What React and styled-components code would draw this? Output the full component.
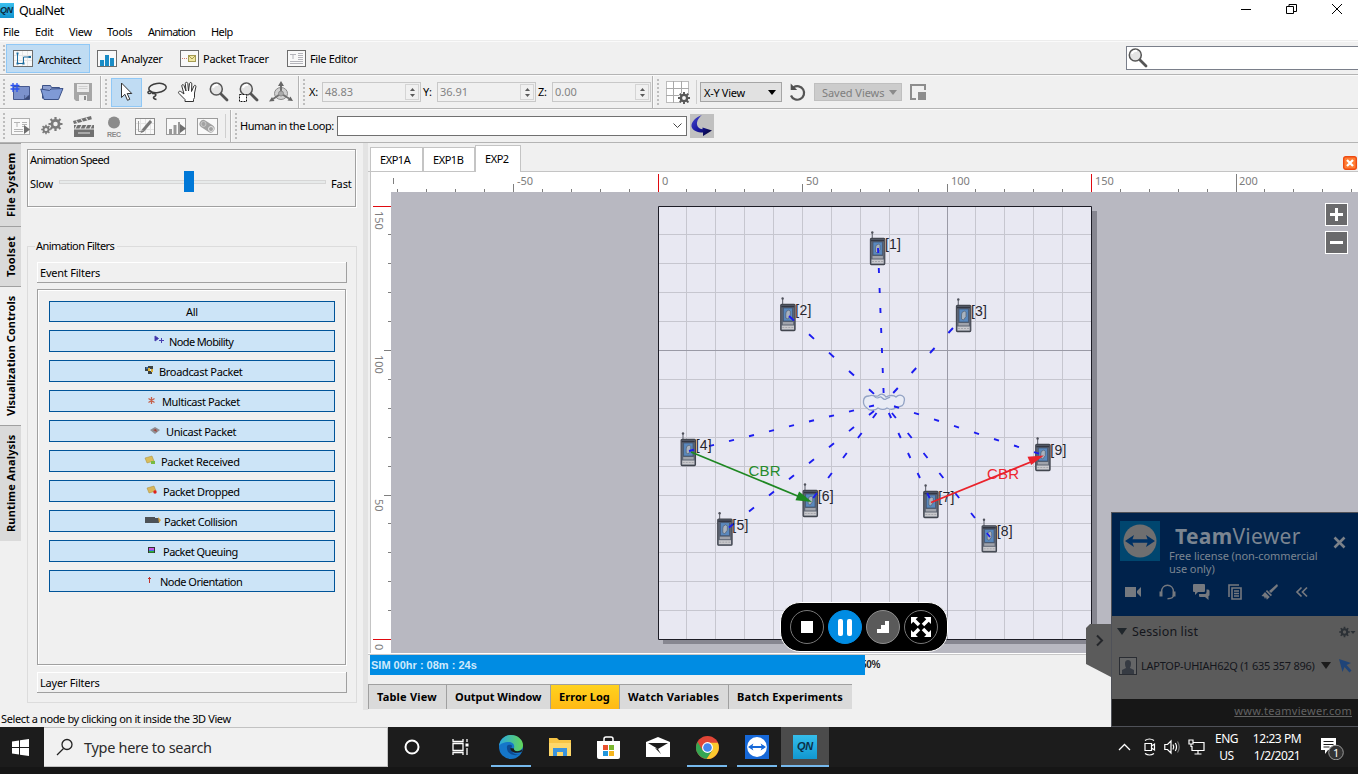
import React from "react";
import styled, { createGlobalStyle, css } from "styled-components";

const UI = `"Noto Sans", "Open Sans", "Liberation Sans", sans-serif`;

const Global = createGlobalStyle`
  *, *::before, *::after { box-sizing: border-box; }
  html, body { margin: 0; padding: 0; overflow: hidden; }
  svg { display: block; flex: none; }
`;

const Desktop = styled.div`
  position: relative;
  width: 1358px;
  height: 774px;
  display: flex;
  flex-direction: column;
  background: #f0f0f0;
  font-family: ${UI};
  font-size: 11px;
  line-height: 14px;
  letter-spacing: -0.3px;
  color: #000;
  overflow: hidden;
  white-space: nowrap;
`;

const Label = styled.span`
  display: block;
  flex: none;
  letter-spacing: ${(p) => p.$ls ?? -0.3}px;
  color: ${(p) => p.$color || "inherit"};
  font-size: ${(p) => p.$size || 11}px;
  font-weight: ${(p) => (p.$bold ? 700 : 400)};
  width: ${(p) => (p.$w ? p.$w + "px" : "auto")};
`;

/* ---------- window frame ---------- */

const TitleBar = styled.header`
  display: flex;
  align-items: center;
  height: 21px;
  flex: none;
  background: #fff;
`;
const AppBadge = styled.div`
  width: 14px;
  height: 15px;
  margin: -1px 5px 0 0;
  background: linear-gradient(#3cc0ee, #1093cf);
  font: italic 700 9px/15px "Liberation Sans", sans-serif;
  letter-spacing: -0.6px;
  color: #0a2c42;
  overflow: hidden;
`;
const WindowButtons = styled.div`
  display: flex;
  gap: 34px;
  margin: -3px 15px 0 auto;
`;
const MenuBar = styled.nav`
  display: flex;
  height: 20px;
  flex: none;
  padding: 4px 0 0 3px;
  background: #fff;
  border-bottom: 1px solid #ececec;
`;

/* ---------- toolbars ---------- */

const Toolbar = styled.div`
  display: flex;
  align-items: center;
  flex: none;
  height: ${(p) => p.$h}px;
  border-top: 1px solid #fafafa;
  border-bottom: 1px solid #b4b4b4;
`;
const Grip = styled.i`
  flex: none;
  width: 2px;
  height: 26px;
  margin: 0 ${(p) => p.$after ?? 5}px 0 3px;
  background: repeating-linear-gradient(#bdbdbd 0 2px, transparent 2px 4px);
`;
const Divider = styled.i`
  flex: none;
  align-self: stretch;
  width: 2px;
  background: linear-gradient(90deg, #b4b4b4 50%, #fafafa 50%);
`;
const Hairline = styled.i`
  flex: none;
  width: 1px;
  height: 24px;
  background: #cfcfcf;
`;
const Slot = styled.div`
  flex: none;
  display: flex;
  align-items: center;
  width: ${(p) => p.$w}px;
`;
const ModeButton = styled.button`
  display: flex;
  align-items: center;
  flex: none;
  height: 29px;
  width: ${(p) => p.$w}px;
  padding: 0 0 0 6px;
  gap: ${(p) => (p.$on ? 5 : 4)}px;
  border: 1px solid ${(p) => (p.$on ? "#90c8f6" : "transparent")};
  background: ${(p) => (p.$on ? "#c0dcf3" : "transparent")};
  font: inherit;
  color: inherit;

  span { padding-top: ${(p) => (p.$on ? 3 : 2)}px; }
`;
const ToolPressed = styled.div`
  display: flex;
  align-items: center;
  justify-content: center;
  width: 31px;
  height: 29px;
  margin-right: 4px;
  border: 1px solid #90c8f6;
  background: #c0dcf3;
`;
const SearchField = styled.div`
  display: flex;
  align-items: center;
  width: 232px;
  height: 24px;
  margin: 0 0 0 auto;
  background: #fff;
  border: 1px solid #7a7f8a;
  border-right: 0;
`;
const Spin = styled.div`
  display: flex;
  align-items: center;
  justify-content: space-between;
  flex: none;
  width: 99px;
  height: 20px;
  padding: 0 1px 0 2px;
  border: 1px solid #c8c8c8;
  color: #838383;
  letter-spacing: 0;
`;
const SpinArrows = styled.div`
  display: flex;
  flex-direction: column;
  justify-content: center;
  align-items: center;
  gap: 3px;
  width: 14px;
  height: 16px;
  border: 1px solid #d4d4d4;
`;
const Dropdown = styled.div`
  display: flex;
  align-items: center;
  justify-content: space-between;
  flex: none;
  width: ${(p) => p.$w}px;
  height: ${(p) => p.$h}px;
  padding: 0 ${(p) => (p.$off ? 4 : 5)}px 0 ${(p) => (p.$off ? 7 : 3)}px;
  background: ${(p) => (p.$off ? "#cccccc" : "#e1e1e1")};
  border: 1px solid ${(p) => (p.$off ? "#bfbfbf" : "#a5a5a5")};
  color: ${(p) => (p.$off ? "#7e7e7e" : "#000")};

  span { padding-top: 1px; }
`;
const Combo = styled.div`
  display: flex;
  align-items: center;
  justify-content: flex-end;
  width: 350px;
  height: 20px;
  padding-right: 4px;
  background: #fff;
  border: 1px solid #707070;
`;
const SendButton = styled.div`
  width: 24px;
  height: 24px;
  margin-left: 3px;
  background: #c0c0c0;
`;

/* ---------- left dock ---------- */

const Workspace = styled.main`
  display: flex;
  flex: none;
  height: 567px;
`;
const SideTabs = styled.div`
  display: flex;
  flex-direction: column;
  width: 21px;
`;
const SideTab = styled.div`
  height: ${(p) => p.$h}px;
  flex: none;
  display: flex;
  align-items: center;
  writing-mode: vertical-rl;
  transform: rotate(180deg);
  line-height: 18px;
  background: ${(p) => (p.$on ? "#f0f0f0" : "#dadada")};
  border-bottom: 1px solid #a0a0a0;
  padding: 9px 2px 0 1px;
  font-weight: 700;
  letter-spacing: ${(p) => p.$ls}px;
`;
const ControlPanel = styled.section`
  width: 342px;
  padding: 6px 6px 0 6px;
`;
const SpeedBox = styled.div`
  width: 329px;
  height: 58px;
  padding: 3px 2px 0 2px;
  border: 1px solid #a0a0a0;
  box-shadow: inset 1px 1px #fff, 1px 1px #fff;
`;
const SliderRow = styled.div`
  display: flex;
  align-items: center;
  margin-top: 10px;
`;
const SliderTrack = styled.div`
  width: 267px;
  height: 4px;
  margin: -4px 5px 0 7px;
  background: #e7eaea;
  border: 1px solid #d6d6d6;
`;
const SliderThumb = styled.div`
  width: 10px;
  height: 21px;
  margin: -10px 0 0 124px;
  background: #0078d7;
`;
const FilterGroup = styled.fieldset`
  width: 330px;
  height: 464px;
  margin: 32px 0 0 0;
  padding: 9px 0 0 9px;
  border: 1px solid #dcdcdc;
`;
const GroupTitle = styled.legend`
  height: 14px;
  margin-left: -2px;
  padding: 0 3px 0 1px;
  letter-spacing: -0.55px;
`;
const SectionHeader = styled.div`
  width: 310px;
  height: 21px;
  padding: 4px 0 0 3px;
  border: solid #a0a0a0;
  border-width: 0 1px 1px 0;
  box-shadow: inset 1px 1px #fff;
  letter-spacing: -0.22px;
`;
const FilterList = styled.div`
  display: flex;
  flex-direction: column;
  gap: 8px;
  width: 309px;
  height: 376px;
  margin: 6px 0 7px;
  padding: 11px 10px 0 11px;
  border: 1px solid #a0a0a0;
  box-shadow: inset 1px 1px #fff, 1px 1px #fff;
`;
const FilterButton = styled.button`
  display: flex;
  align-items: center;
  flex: none;
  height: ${(p) => (p.$plain ? 21 : 22)}px;
  padding: 1px 0 0 ${(p) => p.$pad}px;
  background: #cce4f7;
  border: 1px solid #005499;
  font: inherit;
  letter-spacing: inherit;
  color: #000;
`;
const FilterIcon = styled.span`
  width: ${(p) => p.$w}px;
  display: flex;
  margin-top: -3px;
`;
const Splitter = styled.i`
  width: 5px;
  background: #e3e3e3;
`;

/* ---------- simulation view ---------- */

const View = styled.section`
  display: flex;
  flex-direction: column;
  width: 990px;
`;
const DocTabs = styled.div`
  display: flex;
  align-items: flex-end;
  height: 29px;
  padding-left: 2px;
  border-bottom: 1px solid #c4c4c4;
`;
const DocTab = styled.div`
  flex: none;
  width: ${(p) => p.$w}px;
  height: ${(p) => (p.$on ? 27 : 24)}px;
  padding: ${(p) => (p.$on ? 6 : 5)}px 0 0 9px;
  margin-bottom: ${(p) => (p.$on ? -1 : 0)}px;
  background: #fff;
  border: 1px solid #c4c4c4;
  border-bottom: 0;
  letter-spacing: -0.45px;
`;
const CloseDoc = styled.div`
  margin: 0 1px 1px auto;
`;
const Scene = styled.div`
  height: 482px;
  padding-left: 2px;
  border-bottom: 1px solid #fff;
`;
const ProgressRow = styled.div`
  display: flex;
  height: 30px;
  padding-left: 2px;
  border-top: 1px solid #c8c8c8;
`;
const ProgressFill = styled.div`
  position: relative;
  z-index: 1;
  width: 495px;
  height: 20px;
  background: #008ce3;
  font: 700 11px/20px "Liberation Sans", sans-serif;
  letter-spacing: 0;
  color: #cfe9fb;
  padding-left: 1px;
`;
const ProgressRest = styled.div`
  height: 20px;
  margin-left: -4px;
  font: 700 10px/20px "Liberation Sans", sans-serif;
  color: #222;
`;
const OutputTabs = styled.div`
  display: flex;
  height: 25px;
`;
const OutputTab = styled.div`
  flex: none;
  width: ${(p) => p.$w}px;
  height: 25px;
  padding: 5px 0 0 8px;
  border-top: 1px solid #a0a0a0;
  border-left: 1px solid #a0a0a0;
  background: ${(p) => (p.$alert ? "linear-gradient(#ffd21f, #ffb915)" : "#dadada")};
  font-weight: 700;
  letter-spacing: ${(p) => p.$ls}px;
`;
const StatusBar = styled.footer`
  flex: none;
  height: 17px;
  padding: 2px 0 0 1px;
  letter-spacing: -0.38px;
`;

/* ---------- floating player ---------- */

const Player = styled.div`
  position: absolute;
  left: 780px;
  top: 602px;
  width: 168px;
  height: 50px;
  display: flex;
  align-items: center;
  justify-content: center;
  gap: 4px;
  background: #000;
  border: 1px solid #fff;
  border-radius: 20px;
`;
const Round = styled.div`
  width: 34px;
  height: 34px;
  display: flex;
  align-items: center;
  justify-content: center;
  border-radius: 50%;
  border: 1px solid ${(p) => p.$edge || "#777"};
  background: ${(p) => p.$bg || "#000"};
`;

/* ---------- session overlay ---------- */

const SessionPanel = styled.aside`
  position: absolute;
  left: 1111px;
  top: 512px;
  width: 247px;
  height: 215px;
  display: flex;
  flex-direction: column;
  background: #5b5b5b;
  border: 1px solid #4f5158;
  border-right: 0;
  letter-spacing: 0;
`;
const SessionHandle = styled.div`
  position: absolute;
  left: 1086px;
  top: 624px;
`;
const SessionHead = styled.div`
  height: 103px;
  flex: none;
  padding: 8px 0 0 8px;
  background: #00224b;
  color: #7b8591;
`;
const Brand = styled.div`
  display: flex;
  height: 56px;
`;
const BrandText = styled.div`
  width: 164px;
  margin-left: 9px;
  padding-top: 2px;
  font-size: 11px;
  line-height: 13px;
  letter-spacing: -0.08px;
`;
const BrandName = styled.div`
  padding-left: 6px;
  height: 26px;
  font-size: 21px;
  line-height: 27px;
  letter-spacing: 0.3px;
`;
const SessionClose = styled.div`
  padding-top: 15px;
`;
const SessionTools = styled.div`
  display: flex;
  align-items: center;
  gap: 17px;
  padding: 7px 0 0 5px;
`;
const SessionRow = styled.div`
  display: flex;
  align-items: center;
  height: ${(p) => p.$h}px;
  padding-left: ${(p) => p.$pl}px;
  color: #14161c;
`;
const SessionFoot = styled.div`
  margin-top: auto;
  height: 27px;
  padding: 5px 6px 0 0;
  background: #171717;
  text-align: right;
  font-size: 11px;
  letter-spacing: 0.3px;
  color: #626262;
  text-decoration: underline;
`;

/* ---------- taskbar ---------- */

const Taskbar = styled.footer`
  display: flex;
  flex: none;
  height: 47px;
  background: #1c1c1c;
  border-bottom: 7px solid #161616;
  color: #fff;
`;
const StartCell = styled.div`
  width: 44px;
  padding: 12px 0 0 12px;
`;
const TaskSearch = styled.div`
  display: flex;
  align-items: center;
  gap: 10px;
  width: 344px;
  padding-left: 12px;
  background: #f1f1f1;
  border: 1px solid #c2c2c2;
  border-left: 0;
  color: #2b2b2b;
`;
const TaskCell = styled.div`
  width: ${(p) => p.$w || 49}px;
  display: flex;
  align-items: center;
  justify-content: center;
  background: ${(p) => (p.$on ? "#4b4b4b" : "transparent")};
  ${(p) =>
    p.$open &&
    css`
      background-image: linear-gradient(#76b9ed, #76b9ed);
      background-repeat: no-repeat;
      background-size: ${p.$on ? "100%" : "40px"} 2px;
      background-position: center bottom;
    `}
`;
const QnTile = styled.div`
  width: 24px;
  height: 24px;
  background: linear-gradient(#35bdea, #1197d0);
  color: #0b3048;
  text-align: center;
  font: italic 700 11px/23px "Liberation Sans", sans-serif;
`;
const Tray = styled.div`
  display: flex;
  align-items: center;
  margin-left: auto;
  width: 241px;
`;
const TrayText = styled.div`
  width: ${(p) => p.$w}px;
  text-align: center;
  font-size: 12px;
  line-height: 17px;
  letter-spacing: ${(p) => p.$ls}px;
`;

/* ---------- toolbar icons ---------- */

const Frame = ({ children, w = 20, h = 17, stroke = "#6d6d6d" }) => (
  <svg width={w} height={h} viewBox={`0 0 ${w} ${h}`} fill="none">
    <rect x=".5" y=".5" width={w - 1} height={h - 1} fill="#f9f9f9" stroke={stroke} />
    {children}
  </svg>
);
const ArchitectIcon = () => (
  <Frame>
    <path d="M4.500 1v15M9.500 1v15M14.500 1v15M1 5.500h18M1 10.500h18" stroke="#e6e6e6" />
    <path d="M4.500 3.500V13.500h6V7h6" stroke="#1d6c9f" />
    <path d="M3.500 2.500h2v2h-2zM3.500 12.500h2v2h-2zM9.500 12.500h2v2h-2zM15.500 6h2.500v2h-2.500z" fill="#1d6c9f" />
  </Frame>
);
const AnalyzerIcon = () => (
  <Frame>
    <path d="M3 10h4v6H3zM8 5h4v11H8zM13 8h4v8h-4z" fill="#1a8cc6" />
  </Frame>
);
const TracerIcon = () => (
  <Frame w={19}>
    <path d="M2 8.500h5" stroke="#cf7c6a" strokeDasharray="1 1" />
    <rect x="8.500" y="5.500" width="7" height="6" fill="#f0e7a2" stroke="#a49a51" />
    <path d="m9 6 3 3 3-3" stroke="#a49a51" />
  </Frame>
);
const EditorIcon = () => (
  <Frame w={19}>
    <path d="M3 4.500h6M6 4v5M11 3.500h5M11 5.500h5M11 7.500h5M11 9.500h5M3 11.500h13M3 13.500h13" stroke="#b4b4ba" />
  </Frame>
);
const Magnifier = ({ area }) => (
  <svg width="22" height="22" viewBox="0 0 22 22" fill="none">
    <path d="m13 13 6 6" stroke="#555" strokeWidth="2.800" strokeLinecap="round" />
    <circle cx="8.300" cy="8" r="6" fill="#e4e4e4" stroke="#555" strokeWidth="1.500" />
    <path d="M5 7a4 4 0 0 1 5-3" stroke="#fff" strokeWidth="2" />
    {area && <rect x="1.500" y="13.500" width="7" height="7" fill="#fff" stroke="#111" strokeDasharray="2 1" />}
  </svg>
);
const NewIcon = () => (
  <svg width="22" height="20" viewBox="0 0 22 20" fill="none">
    <path d="M3.500 4.500h16v13h-16z" fill="#7c92cc" stroke="#46598e" />
    <path d="M14 17.500V13h5.500v4.500z" fill="#3b4a78" />
    <path d="m14.500 17 4.500-4h-4.500z" fill="#7288c2" />
    <path d="M3 1v9M7 1v9M.5 3.500h9M.5 7h9" stroke="#2a52f0" strokeWidth="1.300" />
  </svg>
);
const OpenIcon = () => (
  <svg width="24" height="18" viewBox="0 0 24 18" fill="none">
    <path d="M2.500 15.500v-13h8l1 2h8v3" fill="#8c9fd0" stroke="#3c5288" />
    <path d="m.8 6 3.200 10.500h14.500l4.500-11-12 .5-1.500 1.500z" fill="#7f9ad6" stroke="#3c5288" />
  </svg>
);
const SaveIcon = () => (
  <svg width="18" height="18" viewBox="0 0 18 18">
    <path d="M0 0h18v18H2l-2-2z" fill="#a6a6a6" />
    <path d="M3 1h12v8H3zM5 12h8v6H5z" fill="#ececec" />
    <path d="M10 13h2v4h-2z" fill="#8a8a8a" />
    <path d="M4.500 3.500h9M4.500 5.500h9" stroke="#cfcfcf" />
  </svg>
);
const CursorIcon = () => (
  <svg width="13" height="20" viewBox="0 0 13 20">
    <path d="M1.500 1v14.500l3.400-3.200 2.600 6 2.300-1-2.600-5.800h4.600z" fill="#fff" stroke="#333" />
  </svg>
);
const LassoIcon = () => (
  <svg width="22" height="20" viewBox="0 0 22 20" fill="none" stroke="#3d3d3d" strokeWidth="1.500">
    <ellipse cx="11.500" cy="6" rx="8.800" ry="4.500" transform="rotate(-8 11.500 6)" />
    <path d="M4 9c-3 0-2.500 3 0 2.500 2-.3 1.500-2.500 0-2.500M6 11.500c4-.5 5 1.500 2.500 3s0 2.500 2 3" />
  </svg>
);
const HandIcon = () => (
  <svg width="22" height="22" viewBox="0 0 22 22">
    <path
      d="M8 20.500v-2L2 12.500c-1.500-2 .8-2.800 2-1.800L7 13 4.800 5c-.3-1.500 1.700-2 2.200-.5L9 10 8.300 2.500c0-1.600 2.200-1.600 2.500 0L11.500 10l1-7.500c.3-1.500 2.300-1.300 2.300.3L14.500 10.500l2.400-5.500c.7-1.300 2.400-.7 2 .8L17.500 12v4.500l-1 2v2z"
      fill="#fff"
      stroke="#333"
    />
  </svg>
);
const AxesIcon = () => (
  <svg width="24" height="22" viewBox="0 0 24 22" fill="none" stroke="#8a8a8a">
    <ellipse cx="12" cy="12.500" rx="6.500" ry="6" fill="#d0d0d0" />
    <path d="M12 12.500V3M12 12.500 4 18M12 12.500l8 5" strokeWidth="2" stroke="#707070" />
    <path d="m12 0 3 5H9zM0 20.500l5.500-.5L3 16zM24 20l-2.500-4.500-3 4z" fill="#666" stroke="none" />
    <circle cx="12" cy="12.500" r="2.500" fill="#aaa" />
  </svg>
);
const cogTeeth = (cx, cy, r1, r2, n) =>
  Array.from({ length: n }, (_, i) => {
    const a = (i * 2 * Math.PI) / n;
    return `M${cx + r1 * Math.cos(a)} ${cy + r1 * Math.sin(a)}L${cx + r2 * Math.cos(a)} ${cy + r2 * Math.sin(a)}`;
  }).join("");
const Cog = ({ cx, cy, r, color }) => (
  <g stroke={color} fill="none">
    <circle cx={cx} cy={cy} r={r * 0.52} strokeWidth={r * 0.4} />
    <path d={cogTeeth(cx, cy, r * 0.6, r, 8)} strokeWidth={r * 0.32} />
  </g>
);
const GridIcon = () => (
  <svg width="25" height="25" viewBox="0 0 25 25" fill="none">
    <rect x=".5" y="1.500" width="22" height="21" fill="#fff" stroke="#bcbcbc" />
    <path d="M7.500 1v22M15.500 1v22M0 8.500h23M0 15.500h23" stroke="#a9a9a9" />
    <circle cx="18" cy="18" r="5.500" fill="#f4f4f4" />
    <Cog cx={18} cy={18} r={6} color="#585858" />
  </svg>
);
const RefreshIcon = () => (
  <svg width="18" height="19" viewBox="0 0 18 19" fill="none">
    <path d="M4.500 4.300A6.800 6.800 0 1 1 2 12.500" stroke="#555" strokeWidth="2.200" />
    <path d="M1.700.5v6.500h6.500z" fill="#4f4f4f" />
  </svg>
);
const PanelIcon = () => (
  <svg width="16" height="16" viewBox="0 0 16 16" fill="none">
    <path d="M6 15H1V1h14v5" stroke="#8d8d8d" strokeWidth="2" />
    <path d="M8 8h8v8H8z" fill="#8d8d8d" />
  </svg>
);
const RunIcon = () => (
  <Frame w={19} stroke="#b0b0b0">
    <path d="M3 4.500h6M6 4v5M11 4.500h5M11 6.500h5M11 8.500h3M3 11.500h9M3 13.500h9" stroke="#b4b4b4" />
    <path d="M13 7v9l6-4.500z" fill="#6e6e6e" />
  </Frame>
);
const CogsIcon = () => (
  <svg width="22" height="18" viewBox="0 0 22 18">
    <Cog cx={5} cy={12.500} r={4.800} color="#7b7b7b" />
    <Cog cx={14.500} cy={7} r={7} color="#7b7b7b" />
  </svg>
);
const ClapperIcon = () => (
  <svg width="23" height="23" viewBox="0 0 23 23">
    <path d="M2 10h20v12H2z" fill="#707070" />
    <path d="m1 6 18-5 .8 3.200L2 9z" fill="#707070" />
    <path d="m4 5.500 2 3M9 4l2 3M14 2.700l2 3M5 10l-2 3.500M10 10l-2 3.500M15 10l-2 3.500M20 10l-2 3.500M2 14h20M6 18h12" stroke="#e2e2e2" strokeWidth="1.200" />
  </svg>
);
const RecIcon = () => (
  <svg width="16" height="21" viewBox="0 0 16 21">
    <circle cx="8" cy="6.500" r="6" fill="#8b8b8b" />
    <text x="1" y="20.500" fontFamily="Liberation Sans, sans-serif" fontSize="7" fontWeight="700" fill="#8b8b8b" letterSpacing="0" textLength="14">
      REC
    </text>
  </svg>
);
const PencilIcon = () => (
  <Frame w={20} stroke="#8c8c8c">
    <path d="M5.500 1v15M10.500 1v15M15.500 1v15M1 5.500h18M1 11.500h18" stroke="#e4e4e4" />
    <path d="M3.500 3v10.500H9" stroke="#9c9c9c" />
    <path d="m8 12.500 8-9.500" stroke="#777" strokeWidth="3" />
    <path d="m6 15 .7-3.300 2.300 2z" fill="#777" />
  </Frame>
);
const ChartRunIcon = () => (
  <Frame w={20} stroke="#9b9b9b">
    <path d="M3 11h3v5H3zM7.500 7h3v9h-3zM12 4h2v12h-2z" fill="#999" />
    <path d="M14 6v9l6-4.500z" fill="#6e6e6e" />
  </Frame>
);
const LinkIcon = () => (
  <Frame w={21} stroke="#9b9b9b">
    <path d="m6.500 6 7 4.500" stroke="#a2a2a2" strokeWidth="8" strokeLinecap="round" />
    <circle cx="6.500" cy="6" r="2.500" stroke="#c9c9c9" />
    <circle cx="14" cy="11" r="2.500" stroke="#e5e5e5" />
  </Frame>
);
const CurvedArrow = () => (
  <svg width="24" height="24" viewBox="0 0 24 24">
    <defs>
      <linearGradient id="sweep" x1="0" y1="0" x2="1" y2="1">
        <stop offset="0" stopColor="#4848cc" />
        <stop offset=".5" stopColor="#1717a0" />
        <stop offset="1" stopColor="#020220" />
      </linearGradient>
    </defs>
    <path d="M12 1C6 3 1 8 1.500 12.500c1 4 6 6 11.500 6V22l9-5.500-9.500-3v1.700C8.500 15 6.500 11.500 7 8.500 7.500 5.500 9.500 3 12 1z" fill="url(#sweep)" />
  </svg>
);
const Tri = ({ up, c = "#5c5c5c", w = 5, h = 3 }) => (
  <svg width={w} height={h} viewBox="0 0 10 6" preserveAspectRatio="none">
    <path d={up ? "M0 6 5 0l5 6z" : "M0 0h10L5 6z"} fill={c} />
  </svg>
);

/* ---------- filter list ---------- */

const FILTERS = [
  { name: "All", pad: 136, ls: -0.3 },
  {
    name: "Node Mobility", pad: 104, iw: 15, ls: -0.62,
    icon: <path d="M1 1l3.500 2.500L1 6zM7.500 3v5M5 5.500h5" fill="#3a2fa5" stroke="#4a40b0" />,
  },
  {
    name: "Broadcast Packet", pad: 94, iw: 15, ls: -0.33,
    icon: (
      <g>
        <path d="M1 2h3v4H1zM4 1h5v3H4zM4 6h4v3H4z" fill="#3d4344" />
        <path d="M4 3h2v3H4zM7 4h2v3H7z" fill="#e0b43a" />
        <path d="M2 2h2v2H2z" fill="#3e70a8" />
      </g>
    ),
  },
  {
    name: "Multicast Packet", pad: 97, iw: 15, ls: -0.4,
    icon: <path d="M4.500 2v7M1.500 3.500l6 4M1.500 7.500l6-4" stroke="#c5604b" strokeWidth="1.300" />,
  },
  {
    name: "Unicast Packet", pad: 100, iw: 16, ls: -0.37,
    icon: (
      <g>
        <path d="m0 5 5-3 5 3-5 4z" fill="#8f8f93" />
        <path d="m3 5 3-1 1 3z" fill="#a33f36" />
      </g>
    ),
  },
  {
    name: "Packet Received", pad: 94, iw: 17, ls: -0.28,
    icon: (
      <g>
        <path d="m1 3 7-2 2 5-7 2z" fill="#d8bd5c" stroke="#a88c35" strokeWidth=".5" />
        <path d="M7 6h4v3H7z" fill="#77ba42" />
      </g>
    ),
  },
  {
    name: "Packet Dropped", pad: 96, iw: 17, ls: -0.42,
    icon: (
      <g>
        <path d="m1 3 7-2 2 5-7 2z" fill="#d8b65c" stroke="#a88c35" strokeWidth=".5" />
        <circle cx="9" cy="7" r="1.700" fill="#e0201c" />
      </g>
    ),
  },
  {
    name: "Packet Collision", pad: 95, iw: 19, ls: -0.48,
    icon: (
      <g>
        <path d="M0 2h10v6H0zM10 3h4v5h-4z" fill="#4d5257" />
        <path d="m13 2 3 3-2 3z" fill="#d9a23c" />
      </g>
    ),
  },
  {
    name: "Packet Queuing", pad: 98, iw: 15, ls: -0.5,
    icon: (
      <g>
        <path d="M0 2h7v6H0z" fill="#333" />
        <path d="M1 3h5v2H1z" fill="#c855e0" />
        <path d="M1 5h5v1H1z" fill="#4b6be6" />
        <path d="M1 6h5v1.500H1z" fill="#2bb534" />
      </g>
    ),
  },
  {
    name: "Node Orientation", pad: 97, iw: 13, ls: -0.5,
    icon: <path d="M2.500 2v6M1 3.500h3" stroke="#c1332c" />,
  },
];

/* ---------- scene ---------- */

const HUB = [884, 403];
const NODES = [
  { id: 1, x: 870, y: 238, end: [878, 248] },
  { id: 2, x: 780.3, y: 304, end: [789, 316] },
  { id: 3, x: 956, y: 305, end: [964, 316] },
  { id: 4, x: 680.7, y: 439, end: [689, 451] },
  { id: 5, x: 717.3, y: 518.700, end: [726, 530] },
  { id: 6, x: 802.7, y: 490, end: [811, 501] },
  { id: 7, x: 923.3, y: 491, end: [931, 501] },
  { id: 8, x: 981.7, y: 525.300, end: [990, 537] },
  { id: 9, x: 1035.3, y: 444, end: [1043, 455] },
];

const NodeGlyph = ({ x, y }) => (
  <g transform={`translate(${x} ${y})`}>
    <path d="M2.300-6v7" stroke="#6f717c" strokeWidth="1.200" />
    <circle cx="2.300" cy="-5.500" r="1.200" fill="#50525c" />
    <rect x=".4" y=".4" width="14.400" height="26.200" rx="1" fill="#5d6472" stroke="#42464f" strokeWidth="1.100" />
    <path d="M1 2.500h13" stroke="#333743" strokeWidth="1.600" />
    <rect x="3" y="4" width="9.300" height="13" fill="#5a88bd" stroke="#41536e" strokeWidth=".7" />
    <path d="M6 7.500 8.500 6l1.500 1.500v4L7.500 15 5.500 14v-4z" fill="#a9b3bf" stroke="#4d5764" strokeWidth=".6" />
    <path d="M2.500 18h10.400v2.500H2.500z" fill="#a0a3ab" />
    <path d="M1.500 21.500h12.200v4H1.500z" fill="#c9c9cd" />
    <path d="M2 23.500h11" stroke="#a5a6ac" strokeDasharray="2 1" />
  </g>
);

const LinkLine = ({ end }) => {
  const dx = end[0] - HUB[0];
  const dy = end[1] - HUB[1];
  const k = Math.hypot(dx, dy) / Math.max(Math.abs(dx), Math.abs(dy));
  return (
    <path
      d={`M${HUB[0]} ${HUB[1]}L${end[0]} ${end[1]}`}
      stroke="#1c1cf0"
      strokeWidth="1.900"
      strokeDasharray={`${5 * k} ${15 * k}`}
      strokeDashoffset={10 * k}
    />
  );
};

const range = (n) => Array.from({ length: n }, (_, i) => i);
const gx = (i) => Math.floor(658 + i * 28.9 + 0.01) + 0.5;
const gy = (i) => Math.floor(206 + i * 28.9 + 0.01) + 0.5;

const SceneView = () => (
  <svg width="988" height="481" viewBox="370 172 988 481" fill="none" fontFamily='"Noto Sans", sans-serif' letterSpacing="0">
    <path d="M370 172h988v481H370z" fill="#fff" />
    <path d="M370.500 172v481" stroke="#c4c4c4" />
    <path d="M391 192h967v461H391z" fill="#b8b8c1" />

    <path d={range(34).map((i) => `M${gx(i - 9)} 189v3`).join("")} stroke="#7f7f7f" />
    <path d={range(14).map((i) => `M388 ${gy(i + 1)}h3`).join("")} stroke="#7f7f7f" />
    <path d="M513.500 184v8M802.500 184v8M947.500 184v8M1236.500 174v18M384 350.500h7M384 495.500h7M393.500 178v6" stroke="#7f7f7f" />
    <path d="M658.500 174v18M1091.500 174v18M373 206.500h18M373 639.500h18" stroke="#e00a10" />
    <g fill="#7d7d7d" fontSize="11">
      {[["-50", 517], ["0", 662], ["50", 806], ["100", 951], ["150", 1095], ["200", 1239]].map(([t, x]) => (
        <text key={t} x={x} y="185">{t}</text>
      ))}
      {[["150", 211], ["100", 355], ["50", 499], ["0", 644]].map(([t, y]) => (
        <text key={t} transform={`translate(375 ${y}) rotate(90)`}>{t}</text>
      ))}
    </g>

    <path d="M663 211h434v433H663z" fill="#868690" />
    <path d="M658.500 206.500h433v433h-433z" fill="#e8e8f2" />
    <path d={range(14).map((i) => `M${gx(i + 1)} 207v432M659 ${gy(i + 1)}h432`).join("")} stroke="#c6c6cf" />
    <path d="M947.500 207v432M659 350.500h432" stroke="#9a9aa6" />
    <path d="M658.500 206.500h433v433h-433z" stroke="#1c1c26" />

    <path
      d="M867 408c-5-3-5-12 2-12 4-2 6 1 9 0 3-3 6-2 8 1 3-2 8-2 10 0 4-4 10-1 8 5 0 5-5 5-8 5-3 4-7 2-9 1-4 3-7 1-9 0-3 3-9 3-11 0z"
      fill="#e9ecf5"
      stroke="#93a3c4"
      strokeWidth="1.300"
    />
    <path d="M874 396c2 3 4 2 6 1s3 4 6 2 3-1 4-2" stroke="#8fa0c3" strokeWidth="1.200" />
    {NODES.map((n) => <NodeGlyph key={n.id} x={n.x} y={n.y} />)}
    {NODES.map((n) => <LinkLine key={n.id} end={n.end} />)}
    <g fill="#26262e" fontSize="14">
      {NODES.map((n) => (
        <text key={n.id} x={n.x + 15} y={n.y + 11} textLength="16" fontFamily="Liberation Sans, sans-serif">{`[${n.id}]`}</text>
      ))}
    </g>
    <g fontFamily="Liberation Sans, sans-serif" fontSize="15">
      <text x="748.500" y="475.500" fill="#258a2b" textLength="32">CBR</text>
      <text x="987" y="479" fill="#ee2730" textLength="32">CBR</text>
    </g>
    <path d="M691 452 800 497" stroke="#1e8722" strokeWidth="1.800" />
    <path d="m812 502-16.500-1.800 3.600-8.700z" fill="#1e8722" />
    <path d="m931 502.500 101-41" stroke="#ea222b" strokeWidth="1.800" />
    <path d="m1044 456-16.500 1.300 3.600 8.200z" fill="#ea222b" transform="translate(0 -.5)" />

    {[203, 231].map((y, i) => (
      <g key={y}>
        <rect x="1325.500" y={y + 0.5} width="22" height="22" fill="#6a6a6c" stroke="#fff" />
        <path d={`M1330 ${y + 11.500}h13${i ? "" : `M1336.500 ${y + 5}v13`}`} stroke="#fff" strokeWidth="3" />
      </g>
    ))}
  </svg>
);

/* ---------- session overlay icons ---------- */

const SessionIcons = () => (
  <SessionTools>
    <svg width="17" height="16" viewBox="0 0 17 16" fill="#75797f">
      <path d="M0 3h11v10H0zM12 7l4-4v10l-4-4z" />
    </svg>
    <svg width="17" height="16" viewBox="0 0 17 16" fill="none" stroke="#75797f" strokeWidth="1.500">
      <path d="M2.500 8c0-9 12-9 12 0M14.500 11c0 3-2 3.500-6 3.700" />
      <path d="M2 7.500v5M15 7.500v5" strokeWidth="3" />
    </svg>
    <svg width="17" height="16" viewBox="0 0 17 16" fill="#75797f">
      <path d="M1 0h10q1 0 1 1v6q0 1-1 1H5l-3 3V8H1Q0 8 0 7V1q0-1 1-1z" />
      <path d="M13.500 5.500H15q1.500 0 1.500 1.500v4q0 1-1 1v4l-3.500-3H7q-1 0-1-1.500V10h6q1.500 0 1.500-2z" />
    </svg>
    <svg width="17" height="16" viewBox="0 0 17 16" fill="none" stroke="#75797f" strokeWidth="1.600">
      <path d="M12 1H2v12M5 4h9v11H5zM7 7h5M7 9.500h5M7 12h5" />
    </svg>
    <svg width="17" height="16" viewBox="0 0 17 16" fill="#75797f">
      <path d="m16 0 1 2-7 7-2-2zM6 6l5 5-1.200 1.200-5-5zM4 8l4.800 5-3 2.800L5 13l-1 2-1-2.500L.5 12z" />
    </svg>
    <svg width="14" height="16" viewBox="0 0 14 16" fill="none" stroke="#75797f" strokeWidth="1.700">
      <path d="M6.500 3.500 2 8l4.500 4.500M12 3.500 7.500 8l4.500 4.500" />
    </svg>
  </SessionTools>
);
const DoubleArrow = ({ size, ring, disc, arrow }) => (
  <svg width={size} height={size} viewBox="0 0 40 40">
    <path d="M0 0h40v40H0z" fill={ring} />
    <circle cx="20" cy="20" r="16.500" fill={disc} />
    <path d="m5 20 9-6-1.500 4.300h15L26 14l9 6-9 6 1.500-4.300h-15L14 26z" fill={arrow} />
  </svg>
);

export default function App() {
  return (
    <Desktop>
      <Global />
      <TitleBar>
        <AppBadge>QN</AppBadge>
        <Label $size={12.5} $ls={-0.55}>QualNet</Label>
        <WindowButtons>
          <svg width="12" height="12" viewBox="0 0 12 12"><path d="M1 6.500h10" stroke="#000" /></svg>
          <svg width="11" height="12" viewBox="0 0 11 12" fill="none" stroke="#000">
            <path d="M.5 3.500h7v7h-7zM3 3V1.500h7.500v7H8" />
          </svg>
          <svg width="12" height="12" viewBox="0 0 12 12"><path d="m1 1 10 10M11 1 1 11" stroke="#000" /></svg>
        </WindowButtons>
      </TitleBar>
      <MenuBar>
        <Label $w={32}>File</Label>
        <Label $w={34}>Edit</Label>
        <Label $w={38}>View</Label>
        <Label $w={41}>Tools</Label>
        <Label $w={63} $ls={-0.7}>Animation</Label>
        <Label $ls={-0.6}>Help</Label>
      </MenuBar>

      <Toolbar $h={34}>
        <Grip $after={1} />
        <ModeButton $on $w={84}><ArchitectIcon /><Label>Architect</Label></ModeButton>
        <ModeButton $w={83}><AnalyzerIcon /><Label $ls={-0.35}>Analyzer</Label></ModeButton>
        <ModeButton $w={107}><TracerIcon /><Label $ls={-0.25}>Packet Tracer</Label></ModeButton>
        <ModeButton $w={90}><EditorIcon /><Label $ls={-0.35}>File Editor</Label></ModeButton>
        <SearchField><Magnifier /></SearchField>
      </Toolbar>

      <Toolbar $h={34}>
        <Grip />
        <Slot $w={30}><NewIcon /></Slot>
        <Slot $w={34}><OpenIcon /></Slot>
        <Slot $w={26}><SaveIcon /></Slot>
        <Divider />
        <Grip $after={4} />
        <ToolPressed><CursorIcon /></ToolPressed>
        <Slot $w={31}><LassoIcon /></Slot>
        <Slot $w={31}><HandIcon /></Slot>
        <Slot $w={30}><Magnifier /></Slot>
        <Slot $w={31}><Magnifier area /></Slot>
        <Slot $w={29}><AxesIcon /></Slot>
        <Divider />
        <Grip $after={4} />
        {[["X:", "48.83", 13], ["Y:", "36.91", 14], ["Z:", "0.00", 14]].map(([axis, value, w]) => (
          <Slot key={axis} $w={w + 101 - (axis === "Z:" ? 1 : 0)}>
            <Label $w={w}>{axis}</Label>
            <Spin>
              {value}
              <SpinArrows><Tri up /><Tri /></SpinArrows>
            </Spin>
          </Slot>
        ))}
        <Divider />
        <Grip $after={7} />
        <Slot $w={30}><GridIcon /></Slot>
        <Hairline />
        <Slot $w={3} />
        <Dropdown $w={82} $h={20}><Label>X-Y View</Label><Tri c="#000" w={8} h={5} /></Dropdown>
        <Slot $w={7} />
        <Slot $w={25}><RefreshIcon /></Slot>
        <Dropdown $off $w={88} $h={18}><Label $ls={-0.05}>Saved Views</Label><Tri c="#8a8a8a" w={8} h={5} /></Dropdown>
        <Slot $w={8} />
        <PanelIcon />
      </Toolbar>

      <Toolbar $h={34}>
        <Grip $after={6} />
        <Slot $w={30}><RunIcon /></Slot>
        <Slot $w={31}><CogsIcon /></Slot>
        <Slot $w={34}><ClapperIcon /></Slot>
        <Slot $w={29}><RecIcon /></Slot>
        <Slot $w={31}><PencilIcon /></Slot>
        <Slot $w={31}><ChartRunIcon /></Slot>
        <Slot $w={28}><LinkIcon /></Slot>
        <Hairline />
        <Slot $w={4} />
        <Divider />
        <Grip $after={3} />
        <Label $w={97} $ls={-0.47}>Human in the Loop:</Label>
        <Combo>
          <svg width="9" height="6" viewBox="0 0 9 6"><path d="m.5.500 4 4 4-4" fill="none" stroke="#444" /></svg>
        </Combo>
        <SendButton><CurvedArrow /></SendButton>
      </Toolbar>

      <Workspace>
        <SideTabs>
          <SideTab $h={83} $ls={0.22}>File System</SideTab>
          <SideTab $h={60} $ls={0.2}>Toolset</SideTab>
          <SideTab $h={139} $on $ls={0.04}>Visualization Controls</SideTab>
          <SideTab $h={116} $ls={0.15}>Runtime Analysis</SideTab>
        </SideTabs>
        <ControlPanel>
          <SpeedBox>
            <Label $ls={-0.6}>Animation Speed</Label>
            <SliderRow>
              <Label $w={22}>Slow</Label>
              <SliderTrack><SliderThumb /></SliderTrack>
              <Label $ls={-0.1}>Fast</Label>
            </SliderRow>
          </SpeedBox>
          <FilterGroup>
            <GroupTitle>Animation Filters</GroupTitle>
            <SectionHeader>Event Filters</SectionHeader>
            <FilterList>
              {FILTERS.map((f) => (
                <FilterButton key={f.name} $pad={f.pad} $plain={!f.icon}>
                  {f.icon && (
                    <FilterIcon $w={f.iw}>
                      <svg width={f.iw > 17 ? 16 : 11} height="10" fill="none">{f.icon}</svg>
                    </FilterIcon>
                  )}
                  <Label $ls={f.ls}>{f.name}</Label>
                </FilterButton>
              ))}
            </FilterList>
            <SectionHeader>Layer Filters</SectionHeader>
          </FilterGroup>
        </ControlPanel>
        <Splitter />
        <View>
          <DocTabs>
            <DocTab $w={53}>EXP1A</DocTab>
            <DocTab $w={52}>EXP1B</DocTab>
            <DocTab $w={46} $on>EXP2</DocTab>
            <CloseDoc>
              <svg width="14" height="14" viewBox="0 0 14 14">
                <rect x=".7" y=".7" width="12.600" height="12.600" rx="2" fill="#ff7d34" stroke="#ee4a10" strokeWidth="1.400" />
                <path d="m4 4 6 6M10 4l-6 6" stroke="#fff" strokeWidth="2.300" />
              </svg>
            </CloseDoc>
          </DocTabs>
          <Scene><SceneView /></Scene>
          <ProgressRow>
            <ProgressFill>SIM 00hr : 08m : 24s</ProgressFill>
            <ProgressRest>50%</ProgressRest>
          </ProgressRow>
          <OutputTabs>
            <OutputTab $w={78} $ls={0.2}>Table View</OutputTab>
            <OutputTab $w={104} $ls={0}>Output Window</OutputTab>
            <OutputTab $w={69} $alert $ls={0.05}>Error Log</OutputTab>
            <OutputTab $w={109} $ls={0.2}>Watch Variables</OutputTab>
            <OutputTab $w={124} $ls={0.15}>Batch Experiments</OutputTab>
          </OutputTabs>
        </View>
      </Workspace>
      <StatusBar>Select a node by clicking on it inside the 3D View</StatusBar>

      <Taskbar>
        <StartCell>
          <svg width="17" height="17" viewBox="0 0 17 17">
            <path d="m0 2.500 7-1V8H0zM8 1.300 17 0v8H8zM0 9h7v6.500l-7-1zM8 9h9v8l-9-1.300z" fill="#fff" />
          </svg>
        </StartCell>
        <TaskSearch>
          <svg width="18" height="18" viewBox="0 0 18 18" fill="none" stroke="#222" strokeWidth="1.300">
            <circle cx="11" cy="6.500" r="5" />
            <path d="m7.500 10.500-6.500 6.500" />
          </svg>
          <Label $size={14.5} $ls={-0.3}>Type here to search</Label>
        </TaskSearch>
        <TaskCell $w={48}>
          <svg width="16" height="16"><circle cx="8" cy="8" r="6.500" fill="none" stroke="#fff" strokeWidth="2" /></svg>
        </TaskCell>
        <TaskCell $w={49}>
          <svg width="17" height="16" viewBox="0 0 17 16" fill="none" stroke="#fff" strokeWidth="1.300">
            <path d="M1 0v2.500h10V0M1 16v-2.500h10V16M1 4.500h10v7H1zM15 0v3M15 9v7" />
            <path d="M13.500 4.500h3v3h-3z" fill="#fff" stroke="none" />
          </svg>
        </TaskCell>
        <TaskCell $w={51} $open>
          <svg width="24" height="24" viewBox="0 0 24 24">
            <defs>
              <linearGradient id="edgeTop" x1="0" x2="1">
                <stop offset="0" stopColor="#2aa7e0" />
                <stop offset="1" stopColor="#63d658" />
              </linearGradient>
            </defs>
            <circle cx="12" cy="12" r="12" fill="#1576c9" />
            <path d="M0 11C1 4 6 0 12 0c7 0 12 5 12 10 0 4-3 6-6 6-4 0-4-2-3-3 1-4-2-6-5-6-5 0-9 2-10 4z" fill="url(#edgeTop)" />
            <path d="M8 11c-1 7 5 10 10 9l3-1c-6 2-9-3-9-5 0-1 .8-1.500 1-3s-4-2-5 0z" fill="#0c4b93" />
            <path d="M11.500 13c-.5 4 5 6 11 4l1-3c-3 3-9 3-8.500-.5z" fill="#1c1c1c" />
          </svg>
        </TaskCell>
        <TaskCell $w={47}>
          <svg width="22" height="20" viewBox="0 0 22 20">
            <path d="M0 1h8l2 2h12v16H0z" fill="#f6c445" />
            <path d="M0 6h22v13H0z" fill="#fdd76a" />
            <path d="M4 19v-8h14v8h-4v-4H8v4z" fill="#3a93dc" />
          </svg>
        </TaskCell>
        <TaskCell $w={50}>
          <svg width="23" height="23" viewBox="0 0 23 23">
            <path d="M7 6V3q0-2 2-2h5q2 0 2 2v3" fill="none" stroke="#fff" strokeWidth="1.500" />
            <path d="M0 5h23v16q0 2-2 2H2q-2 0-2-2z" fill="#fff" />
            <path d="M6 9h5v5H6z" fill="#e8502e" />
            <path d="M12 9h5v5h-5z" fill="#7bb72f" />
            <path d="M6 15h5v5H6z" fill="#2196dc" />
            <path d="M12 15h5v5h-5z" fill="#f5b51e" />
          </svg>
        </TaskCell>
        <TaskCell $w={49}>
          <svg width="24" height="20" viewBox="0 0 24 20">
            <path d="M0 5 12 0l12 5v15H0z" fill="#fff" />
            <path d="M2 6h20l-10 6zM12 12l3 5-6-6z" fill="#1c1c1c" />
          </svg>
        </TaskCell>
        <TaskCell $w={50} $open>
          <svg width="23" height="23" viewBox="0 0 24 24">
            <circle cx="12" cy="12" r="12" fill="#e04536" />
            <path d="M1.600 6A12 12 0 0 0 11 24l6-9-10 0z" fill="#35a652" />
            <path d="M22.800 7H12l5 8-6 9A12 12 0 0 0 22.800 7z" fill="#fbc82d" />
            <circle cx="12" cy="12" r="5.700" fill="#fff" />
            <circle cx="12" cy="12" r="4.500" fill="#4486ee" />
          </svg>
        </TaskCell>
        <TaskCell $w={49} $open><DoubleArrow size={24} ring="#1668d8" disc="#fff" arrow="#1668d8" /></TaskCell>
        <TaskCell $w={48} $open $on><QnTile>QN</QnTile></TaskCell>
        <Tray>
          <Slot $w={26}>
            <svg width="15" height="10" viewBox="0 0 15 10"><path d="m2 8 5.500-5.500L13 8" fill="none" stroke="#fff" strokeWidth="1.300" /></svg>
          </Slot>
          <Slot $w={21}>
            <svg width="14" height="18" viewBox="0 0 14 18" fill="none" stroke="#fff" strokeWidth="1.200">
              <path d="M2 2.500q4.500-3 9 0M2 15.500q4.500 3 9 0M2 5.500h6.500v7H2zM8.500 8 11.500 6v6l-3-2" />
            </svg>
          </Slot>
          <Slot $w={24}>
            <svg width="18" height="16" viewBox="0 0 18 16" fill="none" stroke="#fff" strokeWidth="1.200">
              <path d="M.8 5.500h2.700L7 2v12L3.500 10.500H.8zM9 5.500q1.500 2.500 0 5M11.300 4q2.500 4 0 8" />
              <path d="M13.500 2.500q3.500 5.500 0 11" stroke="#777" />
            </svg>
          </Slot>
          <Slot $w={25}>
            <svg width="17" height="16" viewBox="0 0 17 16" fill="none" stroke="#fff" strokeWidth="1.200">
              <path d="M5 3.500h11v8H4V7M10 11.500V15M6.500 15h7M1 1h4v4H1zM3 5v3" />
            </svg>
          </Slot>
          <TrayText $w={27} $ls={-0.5}>ENG<br />US</TrayText>
          <TrayText $w={74} $ls={-0.45}>12:23 PM<br />1/2/2021</TrayText>
          <Slot $w={5} />
          <svg width="28" height="26" viewBox="0 0 28 26" fill="none">
            <path d="M2 4h15v12H9l-3 4v-4H2z" fill="#fff" />
            <path d="M4.500 7.500h10M4.500 10.500h10M4.500 13h6" stroke="#1c1c1c" />
            <circle cx="17" cy="18.500" r="7.300" fill="#333" stroke="#999" />
            <text x="14" y="22.500" fill="#fff" fontSize="11">1</text>
          </svg>
        </Tray>
      </Taskbar>

      <Player>
        <Round><svg width="12" height="12"><path d="M0 0h12v12H0z" fill="#fff" /></svg></Round>
        <Round $bg="#008ce3" $edge="#008ce3">
          <svg width="14" height="17"><rect width="5" height="17" rx="2" fill="#fff" /><rect x="9" width="5" height="17" rx="2" fill="#fff" /></svg>
        </Round>
        <Round $bg="#5a5a5a" $edge="#8e8e8e">
          <svg width="12" height="12"><path d="M0 12V8h4V4h4V0h4v12z" fill="#fff" /></svg>
        </Round>
        <Round>
          <svg width="22" height="22" viewBox="0 0 22 22" fill="#fff" stroke="#fff">
            <path d="M1 1h7L1 8zM21 1v7l-7-7zM1 21v-7l7 7zM21 21h-7l7-7z" stroke="none" />
            <path d="m3 3 6 6M19 3l-6 6M3 19l6-6M19 19l-6-6" strokeWidth="3.500" />
          </svg>
        </Round>
      </Player>

      <SessionHandle>
        <svg width="25" height="54" viewBox="0 0 25 54">
          <path d="M25 0H4L0 4v36l25 13z" fill="#5b5b5b" />
          <path d="m11 11.500 5 5-5 5" fill="none" stroke="#24262a" strokeWidth="2" />
        </svg>
      </SessionHandle>
      <SessionPanel>
        <SessionHead>
          <Brand>
            <DoubleArrow size={40} ring="#00466f" disc="#6f6f70" arrow="#003163" />
            <BrandText>
              <BrandName><b>Team</b>Viewer</BrandName>
              Free license (non-commercial<br />use only)
            </BrandText>
            <SessionClose>
              <svg width="13" height="13" viewBox="0 0 13 13"><path d="m1.500 1.500 10 10M11.500 1.500l-10 10" stroke="#7c8289" strokeWidth="2.600" /></svg>
            </SessionClose>
          </Brand>
          <SessionIcons />
        </SessionHead>
        <SessionRow $h={31} $pl={5}>
          <Tri c="#20262b" w={10} h={7} />
          <Slot $w={5} />
          <Label $size={12.5} $ls={0.12} $w={207}>Session list</Label>
          <svg width="17" height="12" viewBox="0 0 17 12">
            <Cog cx={5.500} cy={6} r={5.300} color="#2c3136" />
            <path d="M11.500 5h5l-2.500 3z" fill="#2c3136" />
          </svg>
        </SessionRow>
        <SessionRow $h={37} $pl={7}>
          <svg width="18" height="18" viewBox="0 0 18 18">
            <rect x=".5" y=".5" width="17" height="17" fill="#656667" stroke="#2a2d33" />
            <path d="M6 6c0-4 6-4 6 0s-1 4-1 5l4 2v4H3v-4l4-2c0-1-1-1-1-5z" fill="#363b43" />
          </svg>
          <Slot $w={4} />
          <Label $size={11} $w={180} $ls={-0.25}>LAPTOP-UHIAH62Q (1 635 357 896)</Label>
          <Tri c="#1b1b1b" w={10} h={7} />
          <Slot $w={8} />
          <svg width="13" height="14" viewBox="0 0 13 14"><path d="m0 0 12 4-4.500 2 5 5.500-2 2-5-5.500L3.500 13z" fill="#1f4478" /></svg>
        </SessionRow>
        <SessionFoot>www.teamviewer.com</SessionFoot>
      </SessionPanel>
    </Desktop>
  );
}
